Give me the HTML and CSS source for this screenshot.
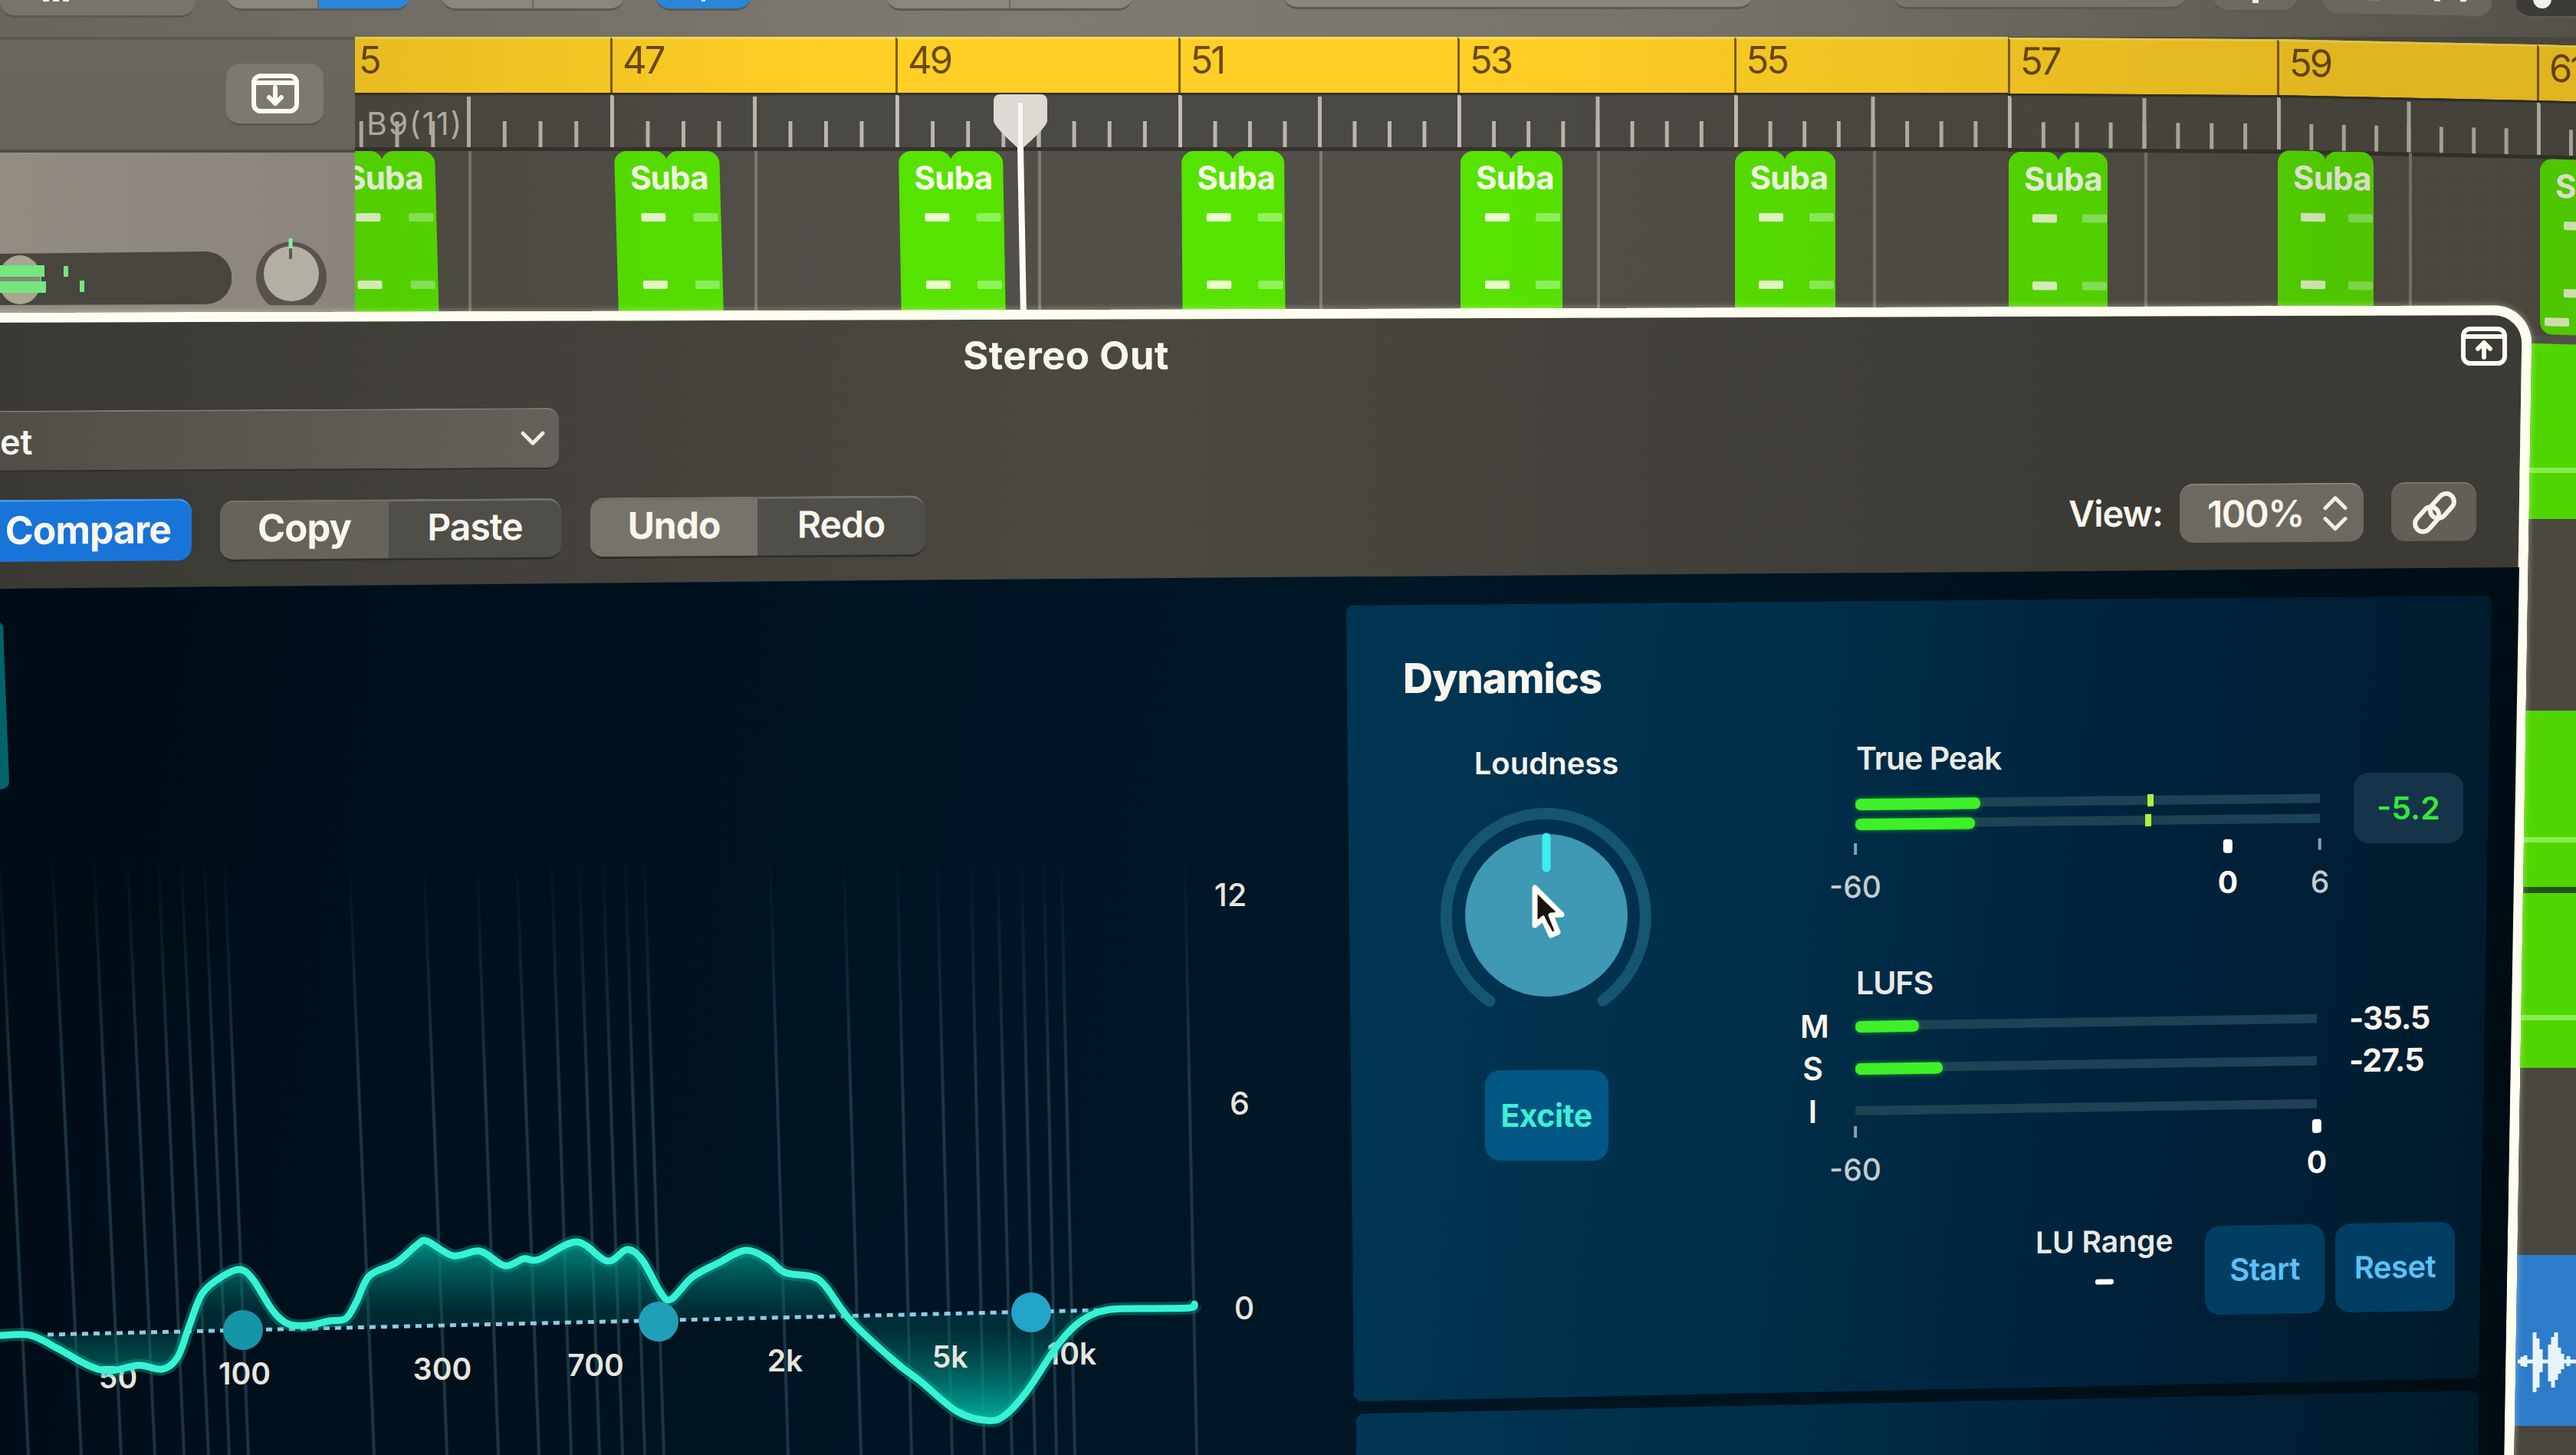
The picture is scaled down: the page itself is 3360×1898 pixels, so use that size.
FILE: index.html
```html
<!DOCTYPE html>
<html lang="en">
<head>
    <meta charset="UTF-8">
    <meta name="viewport" content="width=device-width, initial-scale=1.0">
    <title>Stereo Out</title>
    <link rel="stylesheet" href="styles.css">
    <script src="script.js"></script>
</head>
<body>
    <div class="app">
        <div class="toolbar">
            <div class="tool t1"><b></b><b></b><b></b></div>
            <div class="tool t2"><i></i><i class="on"></i></div>
            <div class="tool t3"><i></i><i></i></div>
            <div class="tool t4 on"><b></b></div>
            <div class="tool t5"><i></i><i></i></div>
            <div class="tool t6"></div>
            <div class="tool t7"></div>
            <div class="tool t8"><b></b></div>
            <div class="tool t9"><i><b></b></i><i><b></b><b></b></i></div>
            <div class="tool t10"><b></b></div>
        </div>

        <div class="arrange">
            <div class="heads">
                <div class="head-top">
                    <div class="icon-btn">
                        <svg width="62" height="52" viewBox="0 0 62 52">
                            <rect x="3" y="3" width="56" height="46" rx="9"/>
                            <path d="M4 12H58M31 18V38M23 31L31 39L39 31"/>
                        </svg>
                    </div>
                </div>
                <div class="head-track">
                    <svg class="volume" width="302" height="70" viewBox="0 0 302 70">
                        <path d="M0 3L268 0A34 34 0 0 1 268 69L0 70Z" fill="#48453f"/>
                        <ellipse cx="26" cy="37" rx="28" ry="32" fill="#a9a592"/>
                        <path d="M0 18H58V33H0ZM0 39H60V54H0Z" fill="#74e67c"/>
                        <path d="M0 33H52V39H0Z" fill="#7f8a72"/>
                        <path d="M83 19H89V33H83ZM104 38H110V53H104Z" fill="#74e67c"/>
                    </svg>
                    <svg class="pan" width="96" height="100" viewBox="0 0 96 100">
                        <path d="M20 92A46 46 0 1 1 76 92" fill="#57534c"/>
                        <circle cx="48" cy="51" r="36" fill="#b4afa4"/>
                        <path d="M47 5V18" stroke="#8fe8a8" stroke-width="5"/>
                        <path d="M47 18V32" stroke="#5d5a52" stroke-width="4"/>
                    </svg>
                </div>
            </div>

            <div class="timeline">
                <div class="bars" id="bars"></div>
                <div class="lane h1"></div>
                <div class="lane h2 green"><span></span></div>
                <div class="lane h3"></div>
                <div class="lane h4 green"><span></span></div>
                <div class="lane h5 green"><span></span></div>
                <div class="lane h6"></div>
                <div class="lane h7 blue">
                    <svg width="76" height="100" viewBox="0 0 76 100">
                        <path d="M0 50H76M6 44V56M10 42V57M22 12V90M26 20V84M30 34V64M42 28V76M46 18V84M50 12V74M54 32V66M58 40V60M66 43V56"/>
                    </svg>
                </div>
                <div class="lane h8"></div>
                <svg class="playhead" width="72" height="290" viewBox="0 0 72 290">
                    <path d="M1 10Q1 1 10 1H62Q71 1 71 10V36Q70 44 36 74Q2 44 1 36Z" fill="#dedad3"/>
                    <path d="M36 12V72" stroke="#f8f6f0" stroke-width="6"/>
                    <path d="M36 70L40 290" stroke="#fffdf6" stroke-width="8"/>
                </svg>
            </div>
        </div>
    </div>

    <div class="window">
        <div class="title-row">
            <h1>Stereo Out</h1>
            <svg width="60" height="52" viewBox="0 0 60 52">
                <rect x="3" y="3" width="54" height="45" rx="9"/>
                <path d="M4 13H56M30 40V22M22 29L30 21L38 29"/>
            </svg>
        </div>
        <div class="preset">
            <span>et</span>
            <svg width="34" height="22" viewBox="0 0 34 22"><path d="M4 4L17 17L30 4"/></svg>
        </div>
        <div class="button-row">
            <div class="compare">Compare</div>
            <div class="seg copy"><span class="lit">Copy</span><span>Paste</span></div>
            <div class="seg undo"><span class="lit">Undo</span><span>Redo</span></div>
            <div class="view">View:</div>
            <div class="zoom">100%
                <svg width="34" height="50" viewBox="0 0 34 50"><path d="M4 18L17 5L30 18M4 32L17 45L30 32"/></svg>
            </div>
            <div class="link">
                <svg width="60" height="60" viewBox="0 0 60 60">
                    <rect x="22" y="11" width="36" height="21" rx="10.5" transform="rotate(-48 40 21)"/>
                    <rect x="3" y="28" width="36" height="21" rx="10.5" transform="rotate(-48 21 39)"/>
                </svg>
            </div>
        </div>

        <div class="plugin">
            <svg class="eq" id="eq" width="1700" height="1158" viewBox="0 740 1700 1158">
                <defs>
                    <linearGradient id="fade" gradientUnits="userSpaceOnUse" x1="0" y1="1110" x2="0" y2="1420">
                        <stop offset="0" stop-color="#2a4c56" stop-opacity="0"/>
                        <stop offset="1" stop-color="#2a4c56" stop-opacity=".62"/>
                    </linearGradient>
                    <linearGradient id="fill" gradientUnits="userSpaceOnUse" x1="0" y1="1610" x2="0" y2="1860">
                        <stop offset="0" stop-color="#00a594" stop-opacity=".9"/>
                        <stop offset=".42" stop-color="#005f60" stop-opacity=".3"/>
                        <stop offset=".5" stop-color="#005f60" stop-opacity=".35"/>
                        <stop offset="1" stop-color="#00c0a8" stop-opacity=".95"/>
                    </linearGradient>
                </defs>
                <path d="M0 812L4 816L12 1020Q12 1028 0 1030Z" fill="#006468"/>
                <g id="grid" stroke="url(#fade)" stroke-width="4"></g>
                <path id="area" fill="url(#fill)"/>
                <path d="M62 1741L1436 1709" stroke="#8fcbe8" stroke-width="5" stroke-dasharray="8 7"/>
                <g class="freq">
                    <text x="154" y="1811">50</text>
                    <text x="319" y="1806">100</text>
                    <text x="577" y="1800">300</text>
                    <text x="777" y="1795">700</text>
                    <text x="1024" y="1789">2k</text>
                    <text x="1239" y="1784">5k</text>
                    <text x="1398" y="1780">10k</text>
                </g>
                <g class="db">
                    <text x="1605" y="1182">12</text>
                    <text x="1617" y="1454">6</text>
                    <text x="1623" y="1721">0</text>
                </g>
                <path id="glow" class="glow"/>
                <path id="curve" class="curve"/>
                <circle cx="317" cy="1735" r="26" fill="#1495a8"/>
                <circle cx="859" cy="1724" r="26" fill="#1f9fb8"/>
                <circle cx="1345" cy="1712" r="26" fill="#22a4cb"/>
            </svg>

            <div class="panels">
                <div class="panel dynamics">
                    <div class="left-col">
                        <h2>Dynamics</h2>
                        <div class="knob-label">Loudness</div>
                        <svg class="knob" width="280" height="280" viewBox="0 0 280 280">
                            <path d="M66 253A130 134 0 1 1 214 252" fill="none" stroke="#14566f" stroke-width="15" stroke-linecap="round"/>
                            <circle cx="140" cy="141" r="106" fill="#3f98b4"/>
                            <path d="M140 39V79" stroke="#3ceef0" stroke-width="11" stroke-linecap="round"/>
                            <g transform="translate(4 4)">
                                <path d="M121 101V150L132 141L142 163L151 159L142 137L156 136Z" fill="#1c120c" stroke="#fffdf4" stroke-width="7" stroke-linejoin="round"/>
                                <path d="M126 112V142L132 135L140 152L137 133L148 132Z" fill="#1c120c"/>
                            </g>
                        </svg>
                        <div class="btn excite">Excite</div>
                    </div>

                    <div class="right-col">
                        <div class="label">True Peak</div>
                        <div class="peak">
                            <div class="stack">
                                <div class="track"><i style="width:26.9%"></i><u style="left:62.8%"></u></div>
                                <div class="track"><i style="width:25.7%"></i><u style="left:62.4%"></u></div>
                                <div class="scale">
                                    <span style="left:0">-60</span>
                                    <span class="zero" style="left:80.2%">0</span>
                                    <span style="left:100%">6</span>
                                </div>
                            </div>
                            <div class="readout">-5.2</div>
                        </div>

                        <div class="label lufs-label">LUFS</div>
                        <div class="lufs">
                            <div class="row"><b>M</b><div class="track"><i style="width:13.8%"></i></div><em>-35.5</em></div>
                            <div class="row"><b>S</b><div class="track"><i style="width:19%"></i></div><em>-27.5</em></div>
                            <div class="row"><b>I</b><div class="track"></div><em></em></div>
                            <div class="scale">
                                <span style="left:0">-60</span>
                                <span class="zero" style="left:100%">0</span>
                            </div>
                        </div>

                        <div class="range-row">
                            <div class="range">LU Range<s></s></div>
                            <div class="btn start">Start</div>
                            <div class="btn">Reset</div>
                        </div>
                    </div>
                </div>
                <div class="panel next"></div>
            </div>
        </div>
    </div>
</body>
</html>
```
FILE: styles.css
```css
* {
    margin: 0;
    padding: 0;
    box-sizing: border-box;
}
html {
    height: 1898px;
    overflow: hidden;
}
body {
    width: 3360px;
    height: 1898px;
    overflow: hidden;
    background: #45433d;
    color: #f9f6ee;
    font-family: Inter, "Liberation Sans", sans-serif;
    font-size: 41px;
    font-weight: 600;
    position: relative;
}
svg {
    display: block;
    fill: none;
}

/* toolbar */
.app {
    height: 1898px;
    overflow: hidden;
}
.toolbar {
    height: 48px;
    display: flex;
    align-items: flex-start;
    background: linear-gradient(90deg, #68655d, #7f7a72 40%, #77726b 65%, #54514b);
}
.tool {
    flex: none;
    height: 60px;
    margin-top: -46px;
    margin-left: 40px;
    display: flex;
    align-items: flex-end;
    justify-content: center;
    background: #8a867b;
    border-radius: 20px;
    border-bottom: 3px solid #5d5952;
    overflow: hidden;
}
.tool i {
    flex: 1;
    height: 60px;
    display: flex;
    align-items: flex-end;
    justify-content: center;
    gap: 26px;
}
.tool i + i {
    border-left: 2px solid #6c6860;
}
.tool b {
    width: 8px;
    height: 13px;
    background: #f2efe6;
}
.tool .on, .tool.on {
    background: #2a86d8;
}
.t1 { width: 255px; margin-left: 0; margin-top: -37px; padding-left: 56px; background: #77746b; justify-content: flex-start; gap: 5px; }
.t1 b { margin-bottom: 18px; height: 4px; }
.t2 { width: 240px; }
.t3 { width: 240px; }
.t4 { width: 125px; }
.t4 b { width: 5px; margin-bottom: 9px; height: 4px; }
.t5 { width: 323px; margin-left: 175px; }
.t6 { width: 614px; margin-left: 195px; margin-top: -48px; }
.t7 { width: 384px; margin-left: 181px; margin-top: -48px; background: #78756c; }
.t8 { width: 109px; margin-left: 35px; margin-top: -44px; background: #6d6a62; }
.t9 { width: 220px; margin-left: 34px; margin-top: -38px; background: #6a675f; transform: skewY(1deg); }
.t10 { width: 110px; margin-left: 32px; margin-top: -36px; background: #3d3b37; justify-content: flex-start; padding-left: 22px; }
.t8 b { height: 7px; margin-bottom: 9px; }
.t9 b { margin-bottom: 18px; height: 5px; }
.t9 i:first-child b { width: 36px; height: 6px; }
.t10 b { width: 24px; height: 20px; margin-bottom: 10px; border-radius: 0 0 12px 12px; }

/* track heads */
.arrange {
    display: flex;
}
.heads {
    width: 463px;
    flex: none;
}
.head-top {
    height: 151px;
    padding: 33px 41px 0 0;
    display: flex;
    justify-content: flex-end;
    background: linear-gradient(#6a675f, #67645d);
    border-top: 4px solid #5c5952;
    border-bottom: 4px solid #4f4c46;
}
.icon-btn {
    width: 127px;
    height: 81px;
    margin-top: -2px;
    border-radius: 18px;
    background: #7d7870;
    border-bottom: 3px solid #5b5750;
    display: flex;
    align-items: center;
    justify-content: center;
}
.icon-btn svg, .title-row svg {
    stroke: #fdfaf0;
    stroke-width: 6;
    stroke-linecap: round;
    stroke-linejoin: round;
}
.head-track {
    height: 230px;
    display: flex;
    align-items: flex-start;
    background: linear-gradient(90deg, #938c83, #8a847d);
}
.volume {
    margin-top: 129px;
}
.pan {
    margin: 107px 0 0 30px;
}

/* timeline */
.timeline {
    flex: 1;
    overflow: hidden;
    position: relative;
    background: #45433d;
}
.timeline::after {
    content: "";
    position: absolute;
    top: 0;
    left: 0;
    right: 0;
    height: 390px;
    background: linear-gradient(90deg, rgba(30, 20, 0, .1), transparent 22%, transparent 50%, rgba(30, 20, 0, .14) 90%);
}
.bars {
    display: flex;
    width: 3300px;
    margin-left: -41px;
    height: 390px;
    background: #514f48;
}
.bar {
    flex: none;
    height: 390px;
    transform-origin: 0 0;
    background: #514f48;
}
.bar:nth-child(7) { transform: translateY(1px) skewY(.35deg); }
.bar:nth-child(8) { transform: translateY(3px) skewY(1.2deg); }
.bar:nth-child(9) { transform: translateY(10px) skewY(1.6deg); }
.num {
    height: 73px;
    padding-left: 13px;
    background: #ffcf25;
    border-top: 3px solid #ffdf50;
    border-left: 3px solid #7d5d0b;
    color: #6a4a08;
    font-size: 49px;
    font-weight: 400;
    letter-spacing: -3px;
    line-height: 56px;
}
.bar:first-child .num {
    padding-left: 43px;
}
.ticks {
    height: 76px;
    padding: 6px 0 0 56px;
    border-bottom: 5px solid #35332e;
    border-top: 3px solid #33302a;
    background:
        linear-gradient(90deg, #c4c0b5 4px, transparent 4px) 0 0 / 100% 100% no-repeat,
        linear-gradient(90deg, #bab6ab 5px, transparent 5px) 0 100% / 12.5% 34px repeat-x,
        linear-gradient(90deg, #bab6ab 5px, transparent 5px) 0 100% / 50% 66px repeat-x,
        #4b4943;
    color: #bcb8ad;
    font-size: 41px;
    font-weight: 400;
    line-height: 62px;
    letter-spacing: 1.8px;
    white-space: nowrap;
}
.lane-cell {
    height: 241px;
    background: linear-gradient(90deg, #7f7b73 4px, transparent 4px) 100% 0 / 49.4% 100% no-repeat;
}
.region {
    width: 36.8%;
    height: 241px;
    margin-left: 4px;
    position: relative;
    display: flex;
    transform-origin: 0 0;
}
.bar:nth-child(1) .region { margin-left: 7px; transform: skewX(1.5deg); }
.bar:nth-child(2) .region { margin-left: 5px; transform: skewX(1.6deg); }
.bar:nth-child(3) .region { transform: skewX(1deg); }
.bar:nth-child(4) .region { transform: skewX(.4deg); }
.bar:nth-child(6) .region,
.bar:nth-child(7) .region { margin-left: 1px; }
.bar:nth-child(8) .region { margin: -4px 0 0 1px; }
.region i {
    flex: 1;
    background: #57e300;
    border-radius: 16px 16px 0 0;
}
.region i + i {
    margin-left: -2px;
}
.region b {
    position: absolute;
    left: 20px;
    top: 0;
    font-size: 42px;
    font-weight: 700;
    line-height: 70px;
    letter-spacing: -.8px;
    color: #f6ffe6;
}
.region u {
    position: absolute;
    width: 32px;
    height: 11px;
    border-radius: 2px;
}
.region u:nth-of-type(odd) { left: 24%; background: #e9ffcb; }
.region u:nth-of-type(even) { left: 74%; background: #8ff25a; }
.region u:nth-of-type(1), .region u:nth-of-type(2) { top: 81px; }
.region u:nth-of-type(3), .region u:nth-of-type(4) { top: 169px; }
.bar:nth-child(9) .region {
    height: 229px;
    width: 130px;
}
.bar:nth-child(9) .region i { border-radius: 16px; }
.bar:nth-child(9) .region i:nth-child(2) { margin-left: -34px; }
.bar:nth-child(9) .region u:nth-of-type(4) { left: 6px; top: 207px; background: #e9ffcb; }

.lane {
    padding-top: 1px;
    background: #47453e;
}
.h1 { height: 7px; background: #2f3a20; }
.h2 { height: 232px; }
.h3 { height: 250px; background: #4a473f; }
.h4 { height: 230px; }
.h5 { height: 236px; border-top: 8px solid #24501a; }
.h6 { height: 244px; background: #48463f; }
.h7 { height: 223px; }
.h8 { height: 38px; }
.green { background-color: #50d500; }
.green span {
    display: block;
    height: 7px;
    margin-top: 164px;
    background: #84ee49;
}
.h5 span { margin-top: 158px; }
.blue {
    background: #2d7cc9;
    display: flex;
    justify-content: flex-end;
    align-items: center;
    padding-top: 54px;
}
.blue svg {
    stroke: #e9f4fa;
    stroke-width: 5;
}
.playhead {
    position: absolute;
    left: 832px;
    top: 74px;
}

/* plugin window */
.window {
    position: absolute;
    top: 400px;
    left: 0;
    width: 3304px;
    height: 1498px;
    isolation: isolate;
}
.window::before {
    content: "";
    position: absolute;
    z-index: -1;
    top: -2px;
    right: 1px;
    left: -80px;
    height: 1500px;
    border: 13px solid #fffdf0;
    border-bottom: 0;
    border-radius: 50px 50px 0 0;
    background: linear-gradient(90deg, #3a3833, #4b4841 45%, #3c3a35 85%);
    transform-origin: 100% 0;
    transform: skew(-.9deg, -.17deg);
    box-shadow: 0 0 8px rgba(255, 250, 220, .45);
}
.title-row {
    height: 132px;
    padding: 26px 34px 0 1256px;
    display: flex;
    justify-content: space-between;
}
.title-row h1 {
    font-size: 51px;
    line-height: 75px;
    letter-spacing: .4px;
    font-weight: 750;
}
.preset {
    width: 729px;
    height: 80px;
    padding: 0 17px 0 0;
    display: flex;
    align-items: center;
    justify-content: space-between;
    border-radius: 0 16px 16px 0;
    border-top: 2px solid #817d73;
    border-bottom: 2px solid #2e2c28;
    background: linear-gradient(90deg, #504e46, #64615a);
    font-size: 45px;
    transform-origin: 100% 0;
    transform: skewY(-.3deg);
}
.preset svg, .zoom svg {
    stroke: #efece3;
    stroke-width: 5;
    stroke-linecap: round;
    stroke-linejoin: round;
}
.button-row {
    height: 81px;
    margin-top: 40px;
    padding-right: 74px;
    display: flex;
    font-size: 48px;
    letter-spacing: -1px;
    line-height: 76px;
    text-align: center;
    transform-origin: 0 0;
    transform: skewY(-.42deg);
}
.compare {
    width: 250px;
    padding-right: 27px;
    border-radius: 0 18px 18px 0;
    border-top: 3px solid #3c96ea;
    background: #1874d8;
    font-size: 50px;
    font-weight: 650;
    line-height: 74px;
    text-align: right;
}
.seg {
    height: 80px;
    margin-top: 3px;
    display: flex;
    border-radius: 18px;
    border-top: 3px solid #74716a;
    border-bottom: 3px solid #302e2a;
    overflow: hidden;
    background: #504e48;
    line-height: 68px;
}
.seg span {
    width: 50%;
}
.seg .lit {
    background: #66635b;
    font-weight: 700;
}
.seg.copy { width: 445px; margin-left: 37px; }
.copy .lit { width: 220px; font-size: 49px; }
.copy span + span { width: 225px; }
.seg.undo { width: 436px; margin-left: 38px; }
.undo .lit { background: #77736b; }
.view {
    margin-left: auto;
    margin-right: 22px;
    font-size: 47px;
    font-weight: 600;
}
.zoom {
    width: 240px;
    height: 77px;
    padding: 0 20px 0 36px;
    display: flex;
    justify-content: space-between;
    align-items: center;
    border-radius: 18px;
    background: #6c6960;
    border-top: 2px solid #8a867c;
    letter-spacing: -1.5px;
}
.link {
    width: 111px;
    height: 77px;
    margin-left: 36px;
    border-radius: 18px;
    background: #625f57;
    border-top: 2px solid #7a776e;
    display: flex;
    align-items: center;
    justify-content: center;
}
.link svg {
    stroke: #f5f2ea;
    stroke-width: 6;
}

/* plugin body */
.plugin {
    width: 3286px;
    height: 1158px;
    margin-top: 7px;
    display: flex;
    background: linear-gradient(100deg, #000c17, #001726 50%, #001019 85%, #000c12);
    clip-path: polygon(0 28px, 1260px 16px, 2600px 6px, 3286px 0, 3266px 1158px, 0 1158px);
}
.eq {
    flex: none;
}
.eq text {
    fill: #e6e6de;
    font-size: 39px;
    font-weight: 600;
    text-anchor: middle;
}
.eq .db text {
    font-size: 41px;
    font-weight: 550;
}
.curve {
    stroke: #36f3d6;
    stroke-width: 9;
    stroke-linecap: round;
    stroke-linejoin: round;
}
.glow {
    stroke: #00b59c;
    stroke-opacity: .35;
    stroke-width: 17;
}
.panels {
    padding: 37px 0 0 56px;
}
.panel {
    width: 1494px;
    background: linear-gradient(97deg, #003654, #002f4a 35%, #00213a 70%, #001a2b);
}
.dynamics {
    height: 1051px;
    padding-left: 74px;
    display: flex;
    clip-path: polygon(0 19px, 6px 13px, 1488px 0, 1494px 6px, 1477px 1014px, 1470px 1021px, 17px 1051px, 10px 1045px);
}
.next {
    height: 84px;
    margin-top: -14px;
    clip-path: polygon(13px 36px, 20px 30px, 1470px 0, 1477px 6px, 1477px 84px, 13px 84px);
}
.left-col {
    width: 374px;
    padding-top: 78px;
    display: flex;
    flex-direction: column;
    align-items: center;
}
.left-col h2 {
    align-self: flex-start;
    font-size: 54px;
    font-weight: 800;
    line-height: 60px;
    letter-spacing: -1px;
}
.knob-label {
    margin-top: 56px;
    line-height: 50px;
    font-size: 40px;
}
.knob {
    margin-top: 32px;
}
.btn {
    width: 156px;
    height: 116px;
    border-radius: 20px;
    background: #003f63;
    color: #5fc0f8;
    font-size: 40px;
    line-height: 116px;
    letter-spacing: -.5px;
    text-align: center;
}
.excite {
    width: 161px;
    height: 118px;
    margin-top: 63px;
    background: #005784;
    color: #3cf0d6;
    font-size: 41px;
    font-weight: 650;
    line-height: 118px;
}
.right-col {
    margin-left: 144px;
    padding-top: 187px;
}
.label {
    margin-left: 73px;
    height: 50px;
    line-height: 50px;
    font-size: 41px;
    letter-spacing: -1px;
    color: #e9ebe6;
}
.peak {
    display: flex;
    align-items: flex-start;
    padding-left: 72px;
}
.stack {
    width: 606px;
    padding-top: 28px;
    transform-origin: 0 0;
    transform: skewY(-.62deg);
}
.track {
    height: 12px;
    background: #1d4254;
    position: relative;
}
.stack .track + .track {
    margin-top: 14px;
}
.track i {
    display: block;
    height: 15px;
    border-radius: 7px;
    background: #3ff028;
    box-shadow: 0 0 6px #169b30;
}
.track u {
    position: absolute;
    top: -2px;
    width: 8px;
    height: 16px;
    background: #b4ee3c;
}
.scale {
    height: 90px;
    position: relative;
    margin-top: 20px;
    font-size: 39px;
    font-weight: 500;
    color: #c3cdd0;
    line-height: 48px;
}
/* each mark is centred on its own place on the scale */
.scale span {
    position: absolute;
    transform: translateX(-50%);
}
.scale span::before {
    content: "";
    display: block;
    width: 4px;
    height: 15px;
    margin: 0 auto 18px;
    background: #8fa0a8;
}
.scale .zero {
    font-weight: 750;
    color: #fffef8;
}
.scale .zero::before {
    width: 12px;
    height: 18px;
    margin-bottom: 14px;
    border-radius: 4px;
    background: #fffef8;
}
.readout {
    width: 143px;
    height: 92px;
    margin: -6px 0 0 44px;
    border-radius: 20px;
    background: #15344a;
    color: #35e83c;
    font-size: 41px;
    line-height: 92px;
    text-align: center;
}
.lufs-label {
    margin-top: 67px;
}
.lufs {
    width: 830px;
    margin-top: 3px;
    transform-origin: 72px 0;
    transform: skewY(-.87deg);
}
.row {
    height: 55.5px;
    display: flex;
    align-items: center;
}
.row b {
    width: 33px;
    margin-right: 39px;
    font-weight: 600;
    text-align: center;
}
.row .track {
    width: 602px;
}
.row em {
    margin-left: 42px;
    font-style: normal;
    letter-spacing: -1px;
    font-weight: 650;
}
.lufs .scale {
    width: 602px;
    height: 90px;
    margin: -8px 0 0 72px;
}
.range-row {
    margin-top: 39px;
    padding-left: 307px;
    display: flex;
    transform-origin: 600px 0;
    transform: skewY(-1deg);
}
.range {
    width: 179px;
    margin: -5px 42px 0 0;
    white-space: nowrap;
    font-size: 39px;
    line-height: 46px;
    color: #e9ebe6;
}
.range s {
    display: block;
    width: 24px;
    height: 7px;
    margin: 26px auto 0;
    border-radius: 3px;
    background: #fffdf4;
}
.start {
    margin-right: 14px;
}
```
FILE: script.js
```js
window.onload = function(){
    // bar number, width of the bar pair on screen
    var bars = [["5",374],[47,372],[49,368.5],[51,364.5],[53,360.5],[55,357.5],[57,351],[59,339],[61,336]];
    var html = "";
    for(var i=0 ; i<bars.length ; i++){
        html += '<div class="bar" style="width:' + bars[i][1] + 'px">' +
            '<div class="num">' + bars[i][0] + '</div>' +
            '<div class="ticks">' + (i == 0 ? 'B9(11)' : '') + '</div>' +
            '<div class="lane-cell"><div class="region"><i></i><i></i><b>Suba</b><u></u><u></u><u></u><u></u></div></div>' +
            '</div>';
    }
    document.getElementById("bars").innerHTML = html;

    // frequency grid: x at y 1200, x at y 1898
    var lines = [[3,37],[72,106],[126,158],[170,202],[210,240],[240,272],[270,299],[296,324],[459,488],
        [556,583],[625,650],[677,703],[722,745],[758,782],[789,812],[818,841],[843,866],
        [1007,1028],[1103,1123],[1172,1189],[1224,1242],[1268,1284],[1303,1320],[1334,1350],[1363,1378],[1386,1402],[1547,1561]];
    var d = "";
    for(var j=0 ; j<lines.length ; j++){
        var a = lines[j][0], b = lines[j][1];
        d += '<path d="M' + (a - (b-a)*0.13) + ' 1110L' + b + ' 1898"/>';
    }
    document.getElementById("grid").innerHTML = d;

    var pts = [[-10,1742],[0,1742],[40,1742],[75,1759],[115,1781],[143,1788],[181,1781],[212,1786],[232,1770],[247,1729],
        [264,1687],[290,1665],[313,1656],[330,1669],[356,1710],[376,1727],[402,1729],[430,1723],[451,1720],[465,1698],[482,1664],
        [517,1647],[545,1623],[557,1619],[591,1638],[626,1632],[658,1651],[683,1642],[703,1643],[752,1620],[792,1645],
        [818,1630],[838,1644],[861,1685],[875,1695],[903,1666],[938,1647],[972,1631],[1001,1642],[1024,1660],[1058,1665],
        [1076,1677],[1110,1723],[1167,1776],[1202,1803],[1248,1841],[1288,1853],[1311,1846],[1340,1814],[1380,1754],
        [1409,1724],[1443,1709],[1500,1707],[1552,1706],[1558,1701]];
    var c = "M" + pts[0];
    for(var k=0 ; k<pts.length-1 ; k++){
        var p0 = pts[k-1] || pts[k], p1 = pts[k], p2 = pts[k+1], p3 = pts[k+2] || p2;
        c += "C" + (p1[0]+(p2[0]-p0[0])/6) + " " + (p1[1]+(p2[1]-p0[1])/6) + " " +
            (p2[0]-(p3[0]-p1[0])/6) + " " + (p2[1]-(p3[1]-p1[1])/6) + " " + p2[0] + " " + p2[1];
    }
    document.getElementById("curve").setAttribute("d", c);
    document.getElementById("glow").setAttribute("d", c);
    document.getElementById("area").setAttribute("d", c + "L1436 1709L62 1741Z");
};
```
